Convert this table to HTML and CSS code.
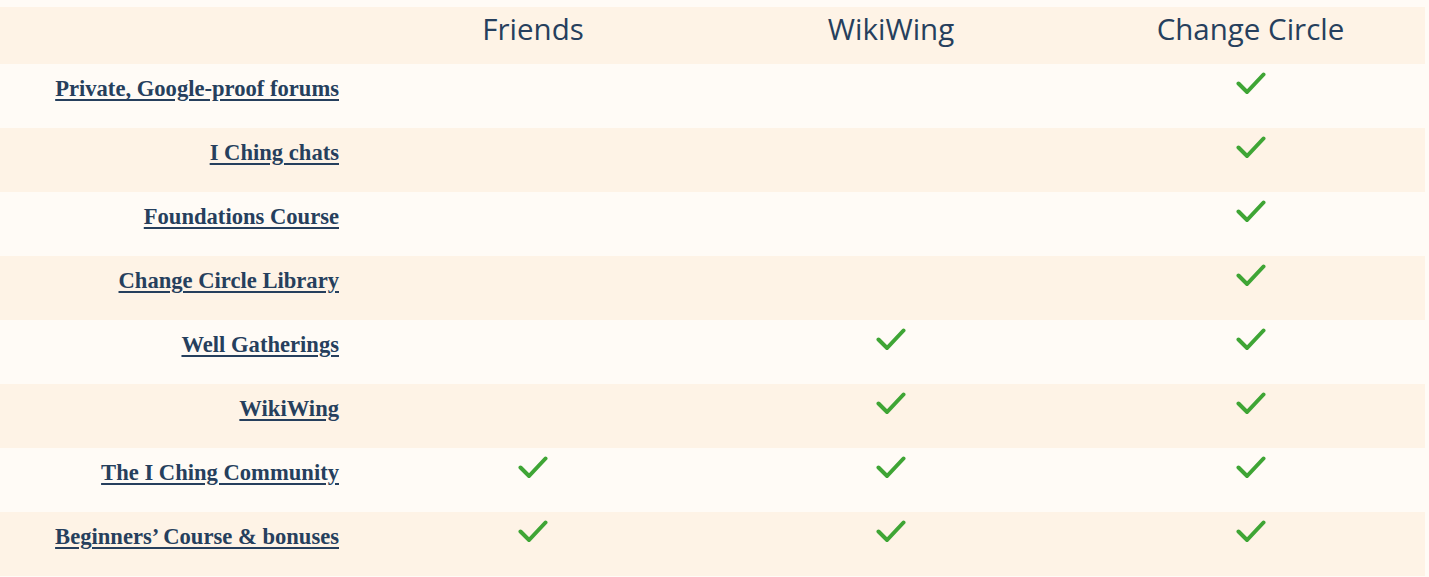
FILE: index.html
```html
<!DOCTYPE html>
<html lang="en">
<head>
    <meta charset="UTF-8">
    <meta name="viewport" content="width=device-width, initial-scale=1.0">
    <title>Membership comparison</title>
    <link rel="stylesheet" href="styles.css">
</head>
<body>
<svg class="sprite" aria-hidden="true">
    <symbol id="tick" viewBox="0 0 30 22">
        <polyline points="2.5,11.5 11,20 27.5,2.5"/>
    </symbol>
</svg>

<table class="compare">
    <colgroup>
        <col class="col-feature">
        <col class="col-level">
        <col class="col-level">
        <col class="col-last">
    </colgroup>
    <thead>
        <tr>
            <th></th>
            <th>Friends</th>
            <th>WikiWing</th>
            <th class="last">Change Circle</th>
        </tr>
    </thead>
    <tbody>
        <tr>
            <td class="feature"><a href="#">Private, Google-proof forums</a></td>
            <td></td>
            <td></td>
            <td class="last"><svg class="check"><use href="#tick"/></svg></td>
        </tr>
        <tr>
            <td class="feature"><a href="#">I Ching chats</a></td>
            <td></td>
            <td></td>
            <td class="last"><svg class="check"><use href="#tick"/></svg></td>
        </tr>
        <tr>
            <td class="feature"><a href="#">Foundations Course</a></td>
            <td></td>
            <td></td>
            <td class="last"><svg class="check"><use href="#tick"/></svg></td>
        </tr>
        <tr>
            <td class="feature"><a href="#">Change Circle Library</a></td>
            <td></td>
            <td></td>
            <td class="last"><svg class="check"><use href="#tick"/></svg></td>
        </tr>
        <tr>
            <td class="feature"><a href="#">Well Gatherings</a></td>
            <td></td>
            <td><svg class="check"><use href="#tick"/></svg></td>
            <td class="last"><svg class="check"><use href="#tick"/></svg></td>
        </tr>
        <tr>
            <td class="feature"><a href="#">WikiWing</a></td>
            <td></td>
            <td><svg class="check"><use href="#tick"/></svg></td>
            <td class="last"><svg class="check"><use href="#tick"/></svg></td>
        </tr>
        <tr>
            <td class="feature"><a href="#">The I Ching Community</a></td>
            <td><svg class="check"><use href="#tick"/></svg></td>
            <td><svg class="check"><use href="#tick"/></svg></td>
            <td class="last"><svg class="check"><use href="#tick"/></svg></td>
        </tr>
        <tr>
            <td class="feature"><a href="#">Beginners’ Course &amp; bonuses</a></td>
            <td><svg class="check"><use href="#tick"/></svg></td>
            <td><svg class="check"><use href="#tick"/></svg></td>
            <td class="last"><svg class="check"><use href="#tick"/></svg></td>
        </tr>
    </tbody>
</table>
</body>
</html>
```

FILE: styles.css
```css
body {
    margin: 0;
    background-color: #fffbf6;
    font-family: "Open Sans", sans-serif;
    color: #263f5d;
}
.sprite {
    display: none;
}
.compare {
    width: 1425px;
    margin-top: 7px;
    table-layout: fixed;
    border-collapse: collapse;
    border-spacing: 0;
}
.col-feature {
    width: 354px;
}
.col-level {
    width: 358px;
}
.col-last {
    width: 355px;
}
.compare thead tr {
    height: 57px;
    background-color: #fef3e6;
}
.compare th {
    padding: 3px 0 0;
    vertical-align: top;
    text-align: center;
    font-weight: 400;
    font-size: 29.5px;
    line-height: 38px;
}
.compare tbody tr {
    height: 64px;
}
.compare tbody tr:nth-child(even) {
    background-color: #fef3e6;
}
.compare td {
    padding: 8px 0 0;
    vertical-align: top;
    text-align: center;
}
.compare .last {
    padding-left: 6px;
}
.compare td.feature {
    padding: 12px 15px 0 0;
    text-align: right;
    font-family: "Liberation Serif", serif;
    font-weight: 700;
    font-size: 22.6px;
    line-height: 26px;
}
.feature a {
    color: #263f5d;
    text-decoration: underline;
    text-decoration-thickness: 2px;
    text-underline-offset: 3px;
}
.check {
    display: inline-block;
    width: 30px;
    height: 22px;
    fill: none;
    stroke: #3fa535;
    stroke-width: 4;
    stroke-linecap: round;
    stroke-linejoin: miter;
}
```
